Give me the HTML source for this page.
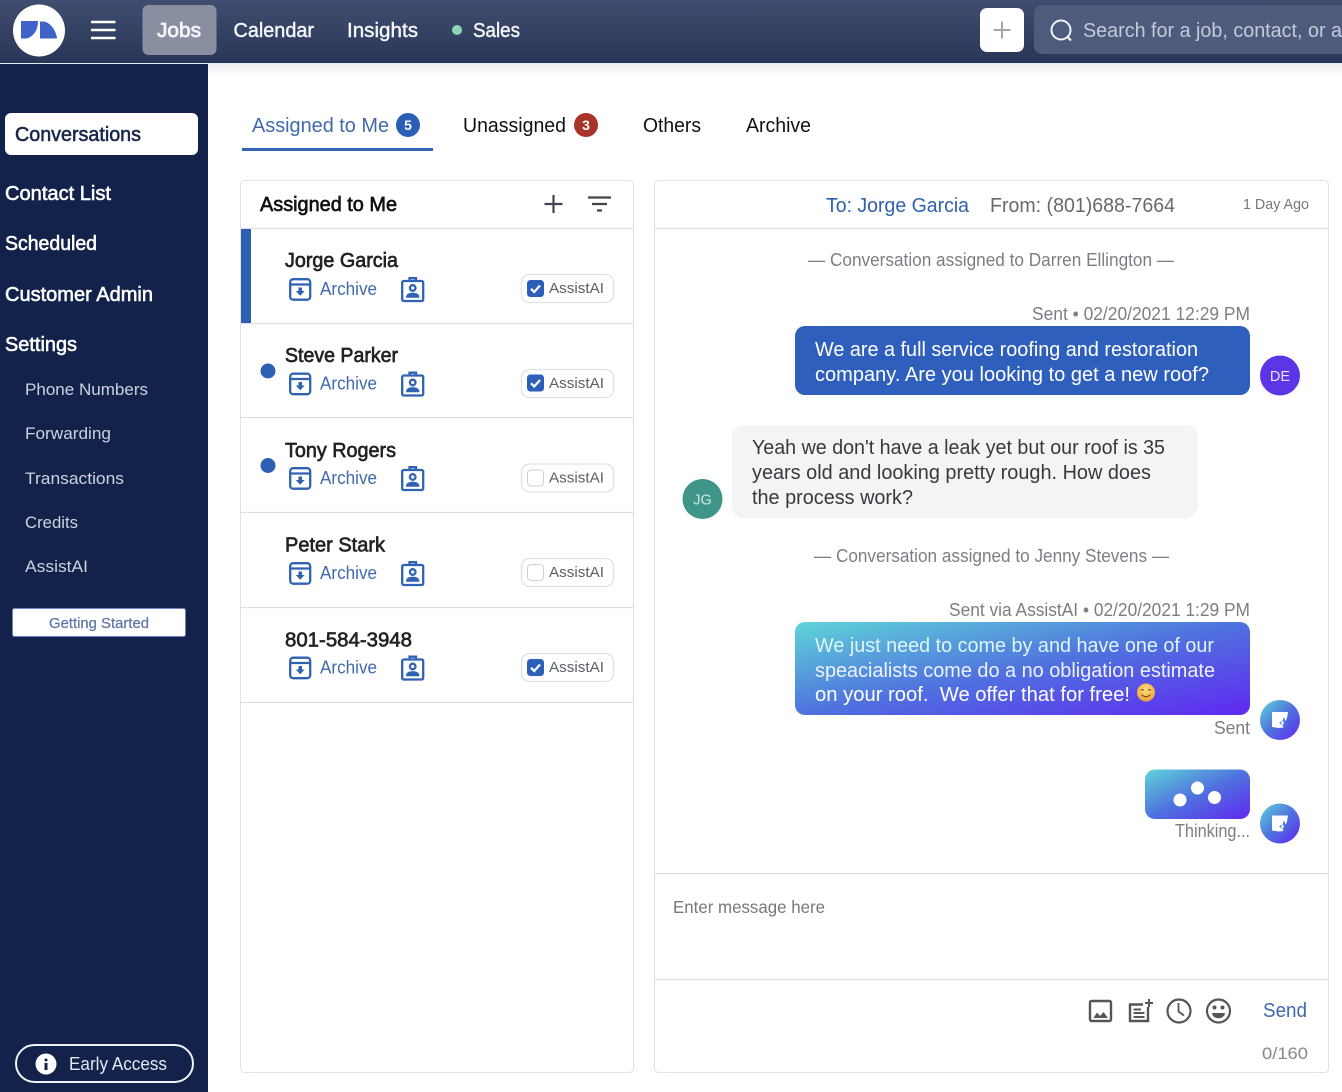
<!DOCTYPE html>
<html lang="en">
<head>
<meta charset="utf-8">
<title>Conversations</title>
<style>
html,body{margin:0;padding:0;background:#fff;width:1342px;height:1092px;overflow:hidden}
svg{display:block}
text{font-family:"Liberation Sans",Arial,sans-serif;white-space:pre}
.nav{font-size:20px;fill:#f4f5f8;stroke:#f4f5f8;stroke-width:.45px}
.side{font-size:20px;fill:#fff;stroke:#fff;stroke-width:.55px}
.sub{font-size:17px;fill:#cdd2df}
.tab{font-size:20px;fill:#111}
.name{font-size:20px;fill:#222;stroke:#222;stroke-width:.65px}
.arch{font-size:18px;fill:#4169ad}
.ai{font-size:15px;fill:#5b5f66}
.meta{font-size:18px;fill:#7b7e84}
.msg{font-size:20px;fill:#fff}
.dark{font-size:20px;fill:#37393d}
</style>
</head>
<body>
<svg xmlns="http://www.w3.org/2000/svg" width="1342" height="1092" viewBox="0 0 1342 1092">
<defs>
<linearGradient id="hd" x1="0" y1="0" x2="0" y2="1"><stop offset="0" stop-color="#414d70"/><stop offset="1" stop-color="#2a3657"/></linearGradient>
<linearGradient id="sh" x1="0" y1="0" x2="0" y2="1"><stop offset="0" stop-color="#ececee"/><stop offset="1" stop-color="#fff"/></linearGradient>
<linearGradient id="ag" x1="0" y1="0" x2="1" y2="1"><stop offset="0" stop-color="#5fd5d8"/><stop offset=".5" stop-color="#4f72de"/><stop offset=".95" stop-color="#5e2ff0"/></linearGradient>
<radialGradient id="em" cx=".5" cy=".35" r=".7"><stop offset="0" stop-color="#fde27a"/><stop offset="1" stop-color="#f29a34"/></radialGradient>
<g id="archive" fill="none" stroke="#2f62b3" stroke-width="2.300">
<rect x="1.200" y="1.200" width="20" height="20.500" rx="3"/>
<path d="M1.200 6.500H21.200"/>
<path d="M9.500 9.500H13V13H15.700L11.200 17.800 6.800 13H9.500Z" fill="#2f62b3" stroke="none"/>
</g>
<g id="badge" fill="none" stroke="#2f62b3" stroke-width="2.300">
<rect x="1.200" y="4" width="21" height="20" rx="1.500"/>
<path d="M8.500 4V1.200H15V4"/>
<circle cx="11.700" cy="11" r="2.800"/>
<path d="M5 20.800c0-4 3-5 6.700-5s6.700 1 6.700 5Z" fill="#2f62b3" stroke="none"/>
</g>
<g id="on"><rect width="17" height="17" rx="3.500" fill="#2b5fb8"/><path d="M4 8.800 7.200 12 13 5.500" fill="none" stroke="#fff" stroke-width="2.200"/></g>
<g id="off"><rect x=".5" y=".5" width="16" height="16" rx="3.500" fill="#fff" stroke="#cfd2d8"/></g>
<g id="pill"><rect x=".5" y=".5" width="92" height="28" rx="8" fill="#fff" stroke="#dfe1e6" stroke-width="1.300"/><text class="ai" x="28" y="19" textLength="55" lengthAdjust="spacingAndGlyphs">AssistAI</text></g>
<g id="bot"><circle r="20" fill="url(#ag)"/><path d="M-8-8H8L7-2 2 0-1 8-8 7Z" fill="#fff"/><path d="M-1 8 3.500 7.500 7-2 2-1Z" fill="#fff"/><path d="M4-3 5.500 1 9 3 5.500 5 4 9 2.500 5-1 3 2.500 1Z" fill="#4a6ee0"/><path d="M3 .8 3.900 3 3 5.200 .9 3Z" fill="#fff"/></g>
</defs>

<!-- content shadow -->
<rect x="208" y="64" width="1134" height="13" fill="url(#sh)"/>

<!-- header -->
<rect width="1342" height="63" fill="url(#hd)"/>
<rect y="63" width="1342" height="1" fill="#e8eaf0"/>
<circle cx="39" cy="30.500" r="26" fill="#fff"/>
<path d="M21 21H38C38 30 34 36 27 38.500H21Z" fill="#3f63c6"/>
<path d="M40 21.500H43C50 22 56 30 57 38.500H40Z" fill="#3f63c6"/>
<path d="M91 22H115.500M91 30H115.500M91 38H115.500" stroke="#fff" stroke-width="2.600" fill="none"/>
<rect x="142.500" y="5" width="74" height="50" rx="6" fill="#898fa1"/>
<text class="nav" x="157" y="37" textLength="44" lengthAdjust="spacingAndGlyphs" style="stroke-width:.75px">Jobs</text>
<text class="nav" x="233.500" y="37" textLength="80.500" lengthAdjust="spacingAndGlyphs">Calendar</text>
<text class="nav" x="347" y="37" textLength="71" lengthAdjust="spacingAndGlyphs">Insights</text>
<circle cx="457" cy="30" r="5" fill="#8ed4b6"/>
<text class="nav" x="473" y="37" textLength="47" lengthAdjust="spacingAndGlyphs">Sales</text>
<rect x="980" y="8" width="44" height="44" rx="7" fill="#fff"/>
<path d="M1002 21.500V38.500M993.500 30H1010.500" stroke="#a3a7ad" stroke-width="2" fill="none"/>
<path d="M1042 5H1342V54H1042A8 8 0 0 1 1034 46V13A8 8 0 0 1 1042 5Z" fill="#4f5b7d"/>
<circle cx="1061" cy="30" r="9.500" fill="none" stroke="#f2f3f6" stroke-width="2"/>
<path d="M1067.500 37 1071 40.500" stroke="#f2f3f6" stroke-width="2.200"/>
<text x="1083" y="37" font-size="20" fill="#c5cad8" textLength="259" lengthAdjust="spacingAndGlyphs">Search for a job, contact, or a</text>

<!-- sidebar -->
<rect y="64" width="208" height="1028" fill="#13224a"/>
<rect x="5" y="113" width="193" height="42" rx="6" fill="#fff"/>
<text class="side" x="15" y="141" textLength="126" lengthAdjust="spacingAndGlyphs" style="fill:#182648;stroke:#182648">Conversations</text>
<text class="side" x="5" y="200" textLength="106" lengthAdjust="spacingAndGlyphs">Contact List</text>
<text class="side" x="5" y="250" textLength="92" lengthAdjust="spacingAndGlyphs">Scheduled</text>
<text class="side" x="5" y="301" textLength="148" lengthAdjust="spacingAndGlyphs">Customer Admin</text>
<text class="side" x="5" y="351" textLength="72" lengthAdjust="spacingAndGlyphs">Settings</text>
<text class="sub" x="25" y="395" textLength="123" lengthAdjust="spacingAndGlyphs">Phone Numbers</text>
<text class="sub" x="25" y="439" textLength="86" lengthAdjust="spacingAndGlyphs">Forwarding</text>
<text class="sub" x="25" y="484" textLength="99" lengthAdjust="spacingAndGlyphs">Transactions</text>
<text class="sub" x="25" y="528" textLength="53" lengthAdjust="spacingAndGlyphs">Credits</text>
<text class="sub" x="25" y="572" textLength="63" lengthAdjust="spacingAndGlyphs">AssistAI</text>
<rect x="12.500" y="608.500" width="173" height="28" rx="2" fill="#fff" stroke="#7083c0"/>
<text x="49" y="628" font-size="15" fill="#6276a8" stroke="#6276a8" stroke-width=".25" textLength="100" lengthAdjust="spacingAndGlyphs">Getting Started</text>
<rect x="16" y="1045" width="177" height="37" rx="18.500" fill="none" stroke="#f2f3f7" stroke-width="2"/>
<circle cx="46" cy="1064" r="10.500" fill="#fff"/>
<rect x="44.500" y="1063" width="3" height="7" fill="#13224a"/>
<rect x="44.500" y="1058.500" width="3" height="3" rx="1.500" fill="#13224a"/>
<text x="69" y="1070" font-size="18" fill="#e4e7f0" textLength="98" lengthAdjust="spacingAndGlyphs">Early Access</text>

<!-- tabs -->
<text class="tab" x="252" y="132" textLength="137" lengthAdjust="spacingAndGlyphs" style="fill:#4169ad">Assigned to Me</text>
<circle cx="408" cy="125" r="12" fill="#2b5fb5"/>
<text x="408" y="130" font-size="14" font-weight="700" fill="#fff" text-anchor="middle">5</text>
<rect x="242" y="148" width="191" height="3" fill="#3465b5"/>
<text class="tab" x="463" y="132" textLength="103" lengthAdjust="spacingAndGlyphs">Unassigned</text>
<circle cx="586" cy="125" r="12" fill="#a83328"/>
<text x="586" y="130" font-size="14" font-weight="700" fill="#fff" text-anchor="middle">3</text>
<text class="tab" x="643" y="132" textLength="58" lengthAdjust="spacingAndGlyphs">Others</text>
<text class="tab" x="746" y="132" textLength="65" lengthAdjust="spacingAndGlyphs">Archive</text>

<!-- conversation list -->
<rect x="240.500" y="180.500" width="393" height="892" rx="4" fill="#fff" stroke="#dfe2e8"/>
<text class="name" x="260" y="211" textLength="137" lengthAdjust="spacingAndGlyphs" style="fill:#111;stroke:#111">Assigned to Me</text>
<path d="M553.500 195V213M544.500 204H562.500" stroke="#41464e" stroke-width="2.200" fill="none"/>
<path d="M588 197.500H611M592 204H607M597 210.500H602" stroke="#41464e" stroke-width="2.200" fill="none"/>
<path d="M241 228.500H633M241 323.500H633M241 417.500H633M241 512.500H633M241 607.500H633M241 702.500H633" stroke="#dcdfe4" stroke-width="1.200"/>
<rect x="241" y="229" width="10" height="94" fill="#2f5fb5"/>
<circle cx="268" cy="371" r="7.500" fill="#2d5fb5"/>
<circle cx="268" cy="465.500" r="7.500" fill="#2d5fb5"/>

<text class="name" x="285" y="267" textLength="113" lengthAdjust="spacingAndGlyphs">Jorge Garcia</text>
<use href="#archive" x="289" y="278"/>
<text class="arch" x="320" y="295" textLength="57" lengthAdjust="spacingAndGlyphs">Archive</text>
<use href="#badge" x="401" y="277"/>
<use href="#pill" x="521" y="274"/><use href="#on" x="527" y="280"/>

<text class="name" x="285" y="362" textLength="113" lengthAdjust="spacingAndGlyphs">Steve Parker</text>
<use href="#archive" x="289" y="372.500"/>
<text class="arch" x="320" y="389.500" textLength="57" lengthAdjust="spacingAndGlyphs">Archive</text>
<use href="#badge" x="401" y="371.500"/>
<use href="#pill" x="521" y="369"/><use href="#on" x="527" y="374.500"/>

<text class="name" x="285" y="457" textLength="111" lengthAdjust="spacingAndGlyphs">Tony Rogers</text>
<use href="#archive" x="289" y="467"/>
<text class="arch" x="320" y="484" textLength="57" lengthAdjust="spacingAndGlyphs">Archive</text>
<use href="#badge" x="401" y="466"/>
<use href="#pill" x="521" y="463.500"/><use href="#off" x="527" y="469.500"/>

<text class="name" x="285" y="551.500" textLength="100" lengthAdjust="spacingAndGlyphs">Peter Stark</text>
<use href="#archive" x="289" y="562"/>
<text class="arch" x="320" y="579" textLength="57" lengthAdjust="spacingAndGlyphs">Archive</text>
<use href="#badge" x="401" y="561"/>
<use href="#pill" x="521" y="558"/><use href="#off" x="527" y="564"/>

<text class="name" x="285" y="646.500" textLength="127" lengthAdjust="spacingAndGlyphs">801-584-3948</text>
<use href="#archive" x="289" y="656.500"/>
<text class="arch" x="320" y="673.500" textLength="57" lengthAdjust="spacingAndGlyphs">Archive</text>
<use href="#badge" x="401" y="655.500"/>
<use href="#pill" x="521" y="653"/><use href="#on" x="527" y="659"/>

<!-- conversation panel -->
<rect x="654.500" y="180.500" width="674" height="892" rx="4" fill="#fff" stroke="#dfe2e8"/>
<path d="M655 228.500H1328M655 873.500H1328M655 979.500H1328" stroke="#dcdfe4" stroke-width="1.200"/>
<text x="826" y="212" font-size="20" fill="#2f62ad" textLength="143" lengthAdjust="spacingAndGlyphs">To: Jorge Garcia</text>
<text x="990" y="212" font-size="20" fill="#66696e" textLength="185" lengthAdjust="spacingAndGlyphs">From: (801)688-7664</text>
<text x="1243" y="209" font-size="15" fill="#75787d" textLength="66" lengthAdjust="spacingAndGlyphs">1 Day Ago</text>

<text class="meta" x="808" y="266" textLength="366" lengthAdjust="spacingAndGlyphs">— Conversation assigned to Darren Ellington —</text>
<text class="meta" x="1032" y="320" textLength="218" lengthAdjust="spacingAndGlyphs">Sent • 02/20/2021 12:29 PM</text>
<rect x="795" y="326" width="455" height="69" rx="10" fill="#2e5fbd"/>
<text class="msg" x="815" y="356" textLength="383" lengthAdjust="spacingAndGlyphs">We are a full service roofing and restoration</text>
<text class="msg" x="815" y="381" textLength="394" lengthAdjust="spacingAndGlyphs">company. Are you looking to get a new roof?</text>
<circle cx="1280" cy="375.500" r="20" fill="#5b35e6"/>
<text x="1280" y="381" font-size="14.500" fill="#e9e6fb" text-anchor="middle">DE</text>

<rect x="732" y="425" width="466" height="93" rx="12" fill="#f3f4f6"/>
<text class="dark" x="752" y="454" textLength="413" lengthAdjust="spacingAndGlyphs">Yeah we don't have a leak yet but our roof is 35</text>
<text class="dark" x="752" y="479" textLength="399" lengthAdjust="spacingAndGlyphs">years old and looking pretty rough. How does</text>
<text class="dark" x="752" y="504" textLength="161" lengthAdjust="spacingAndGlyphs">the process work?</text>
<circle cx="702.500" cy="499" r="20" fill="#3f9688"/>
<text x="702.500" y="504.500" font-size="14.500" fill="#cfe6e1" text-anchor="middle">JG</text>

<text class="meta" x="814" y="562" textLength="355" lengthAdjust="spacingAndGlyphs">— Conversation assigned to Jenny Stevens —</text>
<text class="meta" x="949" y="616" textLength="301" lengthAdjust="spacingAndGlyphs">Sent via AssistAI • 02/20/2021 1:29 PM</text>
<rect x="795" y="622" width="455" height="93" rx="10" fill="url(#ag)"/>
<text class="msg" x="815" y="652" textLength="399" lengthAdjust="spacingAndGlyphs" style="fill:#dff6f8">We just need to come by and have one of our</text>
<text class="msg" x="815" y="677" textLength="400" lengthAdjust="spacingAndGlyphs" style="fill:#eef2fd">speacialists come do a no obligation estimate</text>
<text class="msg" x="815" y="701" textLength="315" lengthAdjust="spacingAndGlyphs">on your roof.  We offer that for free!</text>
<circle cx="1146" cy="692.500" r="9" fill="url(#em)"/>
<path d="M1141 690.500q1.500-2 3 0M1148 690.500q1.500-2 3 0" fill="none" stroke="#7a4a1a" stroke-width="1"/>
<path d="M1141.500 694.500q4.500 4.500 9 0" fill="none" stroke="#7a4a1a" stroke-width="1.100"/>
<text class="meta" x="1214" y="734" textLength="36" lengthAdjust="spacingAndGlyphs">Sent</text>
<use href="#bot" x="1280" y="720"/>

<rect x="1145" y="769.500" width="105" height="49.500" rx="10" fill="url(#ag)"/>
<circle cx="1180" cy="800" r="6.500" fill="#fff"/>
<circle cx="1197.500" cy="788" r="6.500" fill="#fff"/>
<circle cx="1214.500" cy="797.500" r="6.500" fill="#fff"/>
<text class="meta" x="1175" y="837" textLength="75" lengthAdjust="spacingAndGlyphs">Thinking...</text>
<use href="#bot" x="1280" y="823.500"/>

<text x="673" y="913" font-size="17.500" fill="#75787d" textLength="152" lengthAdjust="spacingAndGlyphs">Enter message here</text>

<!-- toolbar -->
<g fill="none" stroke="#555" stroke-width="2.400">
<rect x="1090" y="1001" width="21" height="20" rx="1.500"/>
<path d="M1093.500 1018 1097 1012.500 1100 1016 1103.500 1012 1108 1018Z" fill="#555" stroke="none"/>
<path d="M1148 1007V1021H1130V1004.500H1143"/>
<path d="M1133.500 1009.500H1141M1133.500 1013H1144.500M1133.500 1017H1144.500" stroke-width="2"/>
<path d="M1149 999V1007M1145 1003H1153" stroke-width="2"/>
<circle cx="1179" cy="1011" r="11.500" stroke-width="2.200"/>
<path d="M1178.500 1003V1011.500L1184 1015.500" stroke-width="1.800"/>
<circle cx="1218.500" cy="1011" r="11.500" stroke-width="2.200"/>
</g>
<circle cx="1214.500" cy="1007.500" r="2" fill="#555"/>
<circle cx="1222.500" cy="1007.500" r="2" fill="#555"/>
<path d="M1212 1013H1225C1224.500 1020 1212.500 1020 1212 1013Z" fill="#555"/>
<text x="1263" y="1017" font-size="20" fill="#3f68ad" textLength="44" lengthAdjust="spacingAndGlyphs">Send</text>
<text x="1262" y="1059" font-size="17" fill="#85888d" textLength="46" lengthAdjust="spacingAndGlyphs">0/160</text>
</svg>
</body>
</html>
